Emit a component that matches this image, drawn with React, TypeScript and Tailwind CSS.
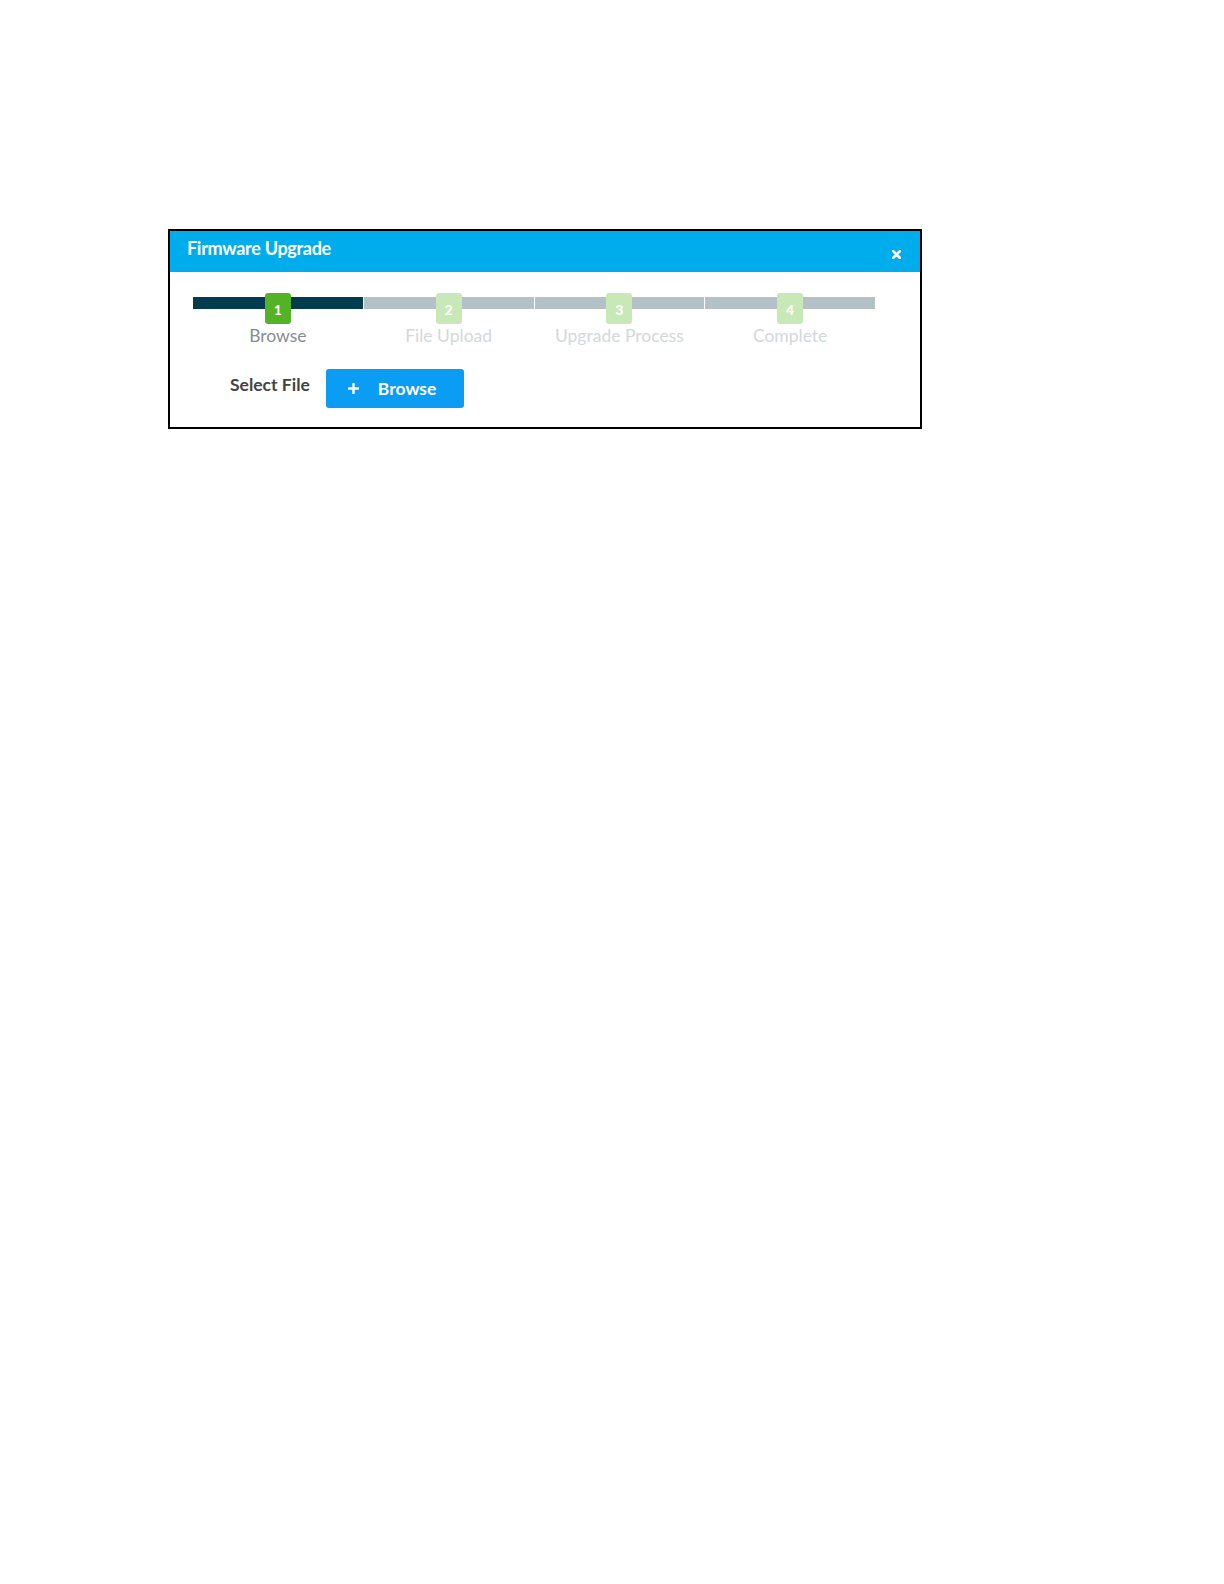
import React from "react";

const steps = [
  { n: "1", label: "Browse", active: true },
  { n: "2", label: "File Upload", active: false },
  { n: "3", label: "Upgrade Process", active: false },
  { n: "4", label: "Complete", active: false },
];

export default function App() {
  return (
    <div className="min-h-[1584px] w-[1224px] bg-white" style={{ fontFamily: "Lato, 'Open Sans', sans-serif" }}>
      <div className="pt-[229px] pl-[168px]">
        <div className="w-[754px] h-[200px] border-2 border-black bg-white flex flex-col">
          {/* header */}
          <div className="h-[41px] bg-[#00adec] flex items-start justify-between pl-[17px] pr-[19px]">
            <div className="pt-[7px] text-[18px] leading-[20px] font-bold text-white tracking-[-0.3px]">Firmware Upgrade</div>
            <svg className="mt-[19px]" width="9" height="9" viewBox="0 0 9 9">
              <path d="M1 1 L8 8 M8 1 L1 8" stroke="white" strokeWidth="2.6" strokeLinecap="square" />
            </svg>
          </div>
          {/* body */}
          <div className="pl-[23px] pr-[45px] pt-[21px]">
            <div className="grid grid-cols-4 gap-x-px">
              {steps.map((s, i) => (
                <div key={i} className="flex flex-col items-center">
                  <div className="relative w-full h-[31px]">
                    <div className={`absolute left-0 right-0 top-[4px] h-[12px] ${s.active ? "bg-[#023c4f]" : "bg-[#b4c2c8]"}`} />
                    <div
                      className={`absolute left-1/2 -translate-x-1/2 top-0 w-[26px] h-[31px] rounded-[3px] flex items-center justify-center text-[14px] font-bold text-white ${s.active ? "bg-[#53b226]" : "bg-[#c8e8b8]"}`}
                    >
                      <span className="pt-[1px]">{s.n}</span>
                    </div>
                  </div>
                  <div className={`mt-[2px] text-[17.5px] leading-[20px] ${s.active ? "text-[#858d93]" : "text-[#d3d8db]"}`}>{s.label}</div>
                </div>
              ))}
            </div>
          </div>
          <div className="flex items-start pl-[60px] mt-[23px]">
            <div className="mt-[6px] text-[17.5px] leading-[20px] font-bold text-[#444444]">Select File</div>
            <button className="ml-[16px] w-[138px] h-[39px] rounded-[3px] bg-[#0b9cf3] flex items-center pl-[22px] text-white">
              <svg width="11" height="11" viewBox="0 0 11 11">
                <rect x="4.3" y="0" width="2.4" height="11" fill="white" />
                <rect x="0" y="4.3" width="11" height="2.4" fill="white" />
              </svg>
              <span className="ml-[19px] pt-[1px] text-[17.5px] leading-[20px] font-bold">Browse</span>
            </button>
          </div>
        </div>
      </div>
    </div>
  );
}
